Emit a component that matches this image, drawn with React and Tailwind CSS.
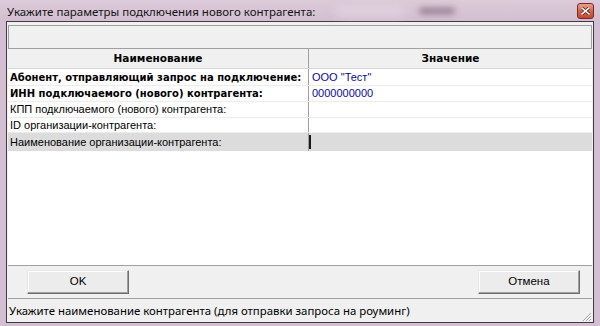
import React from "react";

// Rows of the parameter grid
const rows = [
  { name: "Абонент, отправляющий запрос на подключение:", value: 'ООО "Тест"', bold: true, h: "h-[17px]" },
  { name: "ИНН подключаемого (нового) контрагента:", value: "0000000000", bold: true, h: "h-[16px]" },
  { name: "КПП подключаемого (нового) контрагента:", value: "", h: "h-[16px]" },
  { name: "ID организации-контрагента:", value: "", h: "h-[15px]" },
];

const winFont = { fontFamily: '"Noto Sans", "Liberation Sans", sans-serif' };
const gridFont = { fontFamily: '"Liberation Sans", Arial, sans-serif' };
const boldFont = { fontFamily: '"DejaVu Sans", Verdana, sans-serif' };

const CloseButton = () => (
  <div className="w-[17px] h-[16px] rounded-[3px] border border-[#7a2a22] bg-gradient-to-b from-[#e8a08e] via-[#d2644c] to-[#c04a32] flex items-center justify-center">
    <svg width="9" height="8" viewBox="0 0 9 8">
      <path d="M1 1 L8 7 M8 1 L1 7" stroke="#5a1a12" strokeWidth="3" strokeLinecap="square" />
      <path d="M1 1 L8 7 M8 1 L1 7" stroke="#ffffff" strokeWidth="1.6" strokeLinecap="square" />
    </svg>
  </div>
);

const Button = ({ children }) => (
  <button className="w-[102px] h-[24px] bg-[#ececec] border border-t-[#e8e8e8] border-l-[#e8e8e8] border-r-[#6e6e6e] border-b-[#6e6e6e] shadow-[inset_-1px_-1px_0_#a0a0a0,inset_1px_1px_0_#ffffff] text-[11.5px] text-black" style={gridFont}>
    {children}
  </button>
);

const SizeGrip = () => (
  <svg width="12" height="12" viewBox="0 0 12 12">
    <path d="M11 3 L3 11 M11 6 L6 11 M11 9 L9 11" stroke="#a0a0a0" strokeWidth="1" />
    <path d="M11 4 L4 11 M11 7 L7 11 M11 10 L10 11" stroke="#ffffff" strokeWidth="1" />
  </svg>
);

export default function App() {
  return (
    <div className="w-[600px] h-[326px] bg-[#d3bfd1] flex flex-col overflow-hidden" style={winFont}>
      {/* title bar */}
      <div className="h-[21px] flex items-center pl-[7px] pr-[6px] bg-gradient-to-b from-[#dccbd9] to-[#d2bed0]">
        <span className="text-[11.5px] text-[#141414] leading-none pt-[3px]">Укажите параметры подключения нового контрагента:</span>
        <div className="ml-[20px] w-[70px] h-[10px] rounded-full bg-[#e0d2df] blur-[4px]" />
        <div className="ml-[14px] w-[36px] h-[6px] rounded-full bg-[#8f7a8c] blur-[3px]" />
        <div className="ml-auto">
          <CloseButton />
        </div>
      </div>

      {/* client area */}
      <div className="flex-1 mx-[6px] mb-[3px] border border-[#3c3c3c] bg-[#f0f0f0] flex flex-col">
        <div className="pt-[3px] px-[1px]">
          <div className="h-[24px] border border-[#a0a0a0] bg-[#f0f0f0]" />
        </div>

        {/* grid */}
        <div className="flex-1 mx-[1px] bg-white flex flex-col" style={gridFont}>
          <div className="h-[20px] flex bg-[#f0f0f0] border-b border-[#d8d8d8]">
            <div className="w-[300px] flex items-center justify-center text-[10.5px] font-bold text-black" style={boldFont}>Наименование</div>
            <div className="flex-1 flex items-center justify-center text-[10.5px] font-bold text-black border-l border-[#a0a0a0]" style={boldFont}>Значение</div>
          </div>
          {rows.map((r) => (
            <div key={r.name} className={`${r.h} flex border-b border-[#ececec]`}>
              <div
                className={`w-[300px] pl-[2px] flex items-center whitespace-nowrap overflow-hidden text-black ${r.bold ? "text-[10px] font-bold" : "text-[11px]"}`}
                style={r.bold ? boldFont : gridFont}
              >
                {r.name}
              </div>
              <div className="flex-1 pl-[3px] flex items-center text-[11px] text-[#0a0aa0] border-l border-[#a0a0a0]">{r.value}</div>
            </div>
          ))}
          <div className="h-[18px] flex bg-[#dcdcdc]">
            <div className="w-[300px] pl-[2px] flex items-center text-[11px] text-black">Наименование организации-контрагента:</div>
            <div className="flex-1 flex items-center border-l border-[#a0a0a0]">
              <div className="w-[2px] h-[14px] bg-[#1a1a1a]" />
            </div>
          </div>
        </div>

        {/* buttons */}
        <div className="h-[33px] mx-[1px] border-t border-[#a0a0a0] flex items-center justify-between pl-[19px] pr-[12px]">
          <Button>OK</Button>
          <Button>Отмена</Button>
        </div>

        {/* status bar */}
        <div className="h-[24px] mx-[1px] border-t border-[#a0a0a0] flex items-center justify-between">
          <span className="text-[11.4px] text-black pl-[1px]">Укажите наименование контрагента (для отправки запроса на роуминг)</span>
          <div className="self-end">
            <SizeGrip />
          </div>
        </div>
      </div>
    </div>
  );
}
